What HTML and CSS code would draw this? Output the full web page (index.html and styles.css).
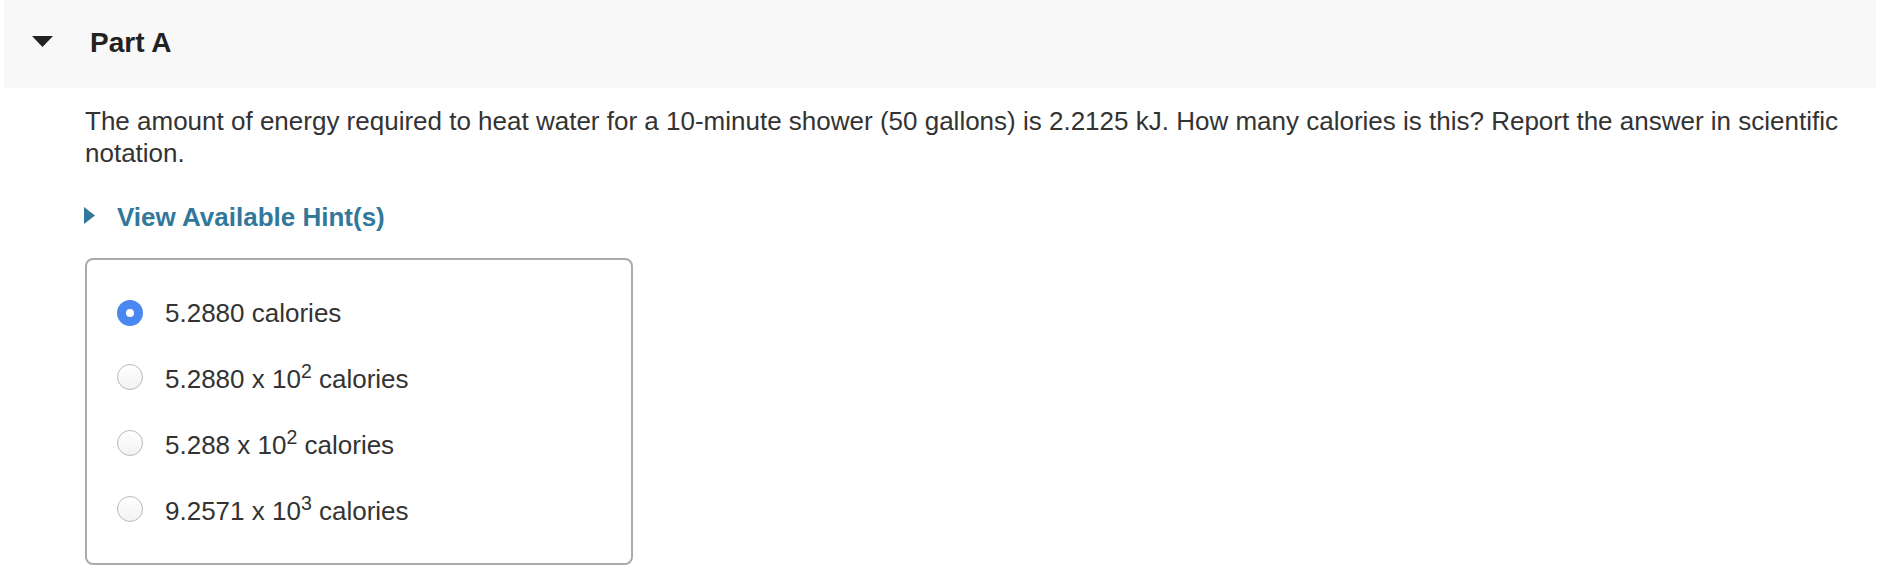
FILE: index.html
```html
<!DOCTYPE html>
<html>
<head>
<meta charset="utf-8">
<link rel="stylesheet" href="styles.css">
</head>
<body>
<div class="page">
  <div class="part-header">
    <svg class="caret-down" width="21" height="11" viewBox="0 0 21 11"><polygon points="0,0 21,0 10.5,11" fill="#222"/></svg>
    <h2 class="part-title">Part A</h2>
  </div>
  <div class="part-body">
    <p class="question">The amount of energy required to heat water for a 10-minute shower (50 gallons) is 2.2125 kJ. How many calories is this? Report the answer in scientific notation.</p>
    <div class="hint">
      <svg class="caret-right" width="11" height="17" viewBox="0 0 11 17"><polygon points="0,0 11,8.5 0,17" fill="#32789a"/></svg>
      <span class="hint-label">View Available Hint(s)</span>
    </div>
    <div class="choices">
      <label class="choice"><span class="radio checked"></span><span class="choice-text">5.2880 calories</span></label>
      <label class="choice sup-row"><span class="radio"></span><span class="choice-text">5.2880 x 10<sup>2</sup> calories</span></label>
      <label class="choice sup-row"><span class="radio"></span><span class="choice-text">5.288 x 10<sup>2</sup> calories</span></label>
      <label class="choice sup-row"><span class="radio"></span><span class="choice-text">9.2571 x 10<sup>3</sup> calories</span></label>
    </div>
  </div>
</div>
</body>
</html>
```

FILE: styles.css
```css
html, body {
  margin: 0;
  padding: 0;
  background: #fff;
}
body {
  font-family: "Liberation Sans", Arial, Helvetica, sans-serif;
  color: #333;
  font-size: 26px;
  line-height: 32px;
}
.page {
  margin: 0 20px 0 4px;
}
.part-header {
  height: 88px;
  background: #f8f8f8;
  display: flex;
  align-items: center;
  padding-left: 28px;
}
.caret-down {
  display: block;
  margin-top: -5px;
}
.part-title {
  margin: -2px 0 0 37px;
  font-size: 28px;
  font-weight: bold;
  color: #222;
  line-height: 32px;
}
.part-body {
  padding: 0 16px 0 81px;
}
.question {
  margin: 17px 0 0 0;
}
.hint {
  display: flex;
  align-items: center;
  margin-top: 32px;
  height: 32px;
}
.caret-right {
  display: block;
  margin-left: -1px;
  margin-top: -3px;
}
.hint-label {
  margin-left: 22px;
  font-weight: bold;
  color: #32789a;
}
.choices {
  margin-top: 25px;
  width: 514px;
  border: 2px solid #ababab;
  border-radius: 8px;
  padding: 37px 0 36px 30px;
  display: flex;
  flex-direction: column;
  gap: 34px;
}
.choice {
  display: flex;
  align-items: center;
}
.sup-row .radio {
  margin-top: -4px;
}
.radio {
  width: 26px;
  height: 26px;
  box-sizing: border-box;
  border-radius: 50%;
  border: 1px solid #b9b9b9;
  background: linear-gradient(#fff, #f2f2f2);
  flex: none;
}
.radio.checked {
  border: 9px solid #4a87f0;
  background: #fff;
}
.choice-text {
  margin-left: 22px;
  color: #333;
}
.choice-text sup {
  font-size: 0.75em;
  line-height: 0;
}
```
